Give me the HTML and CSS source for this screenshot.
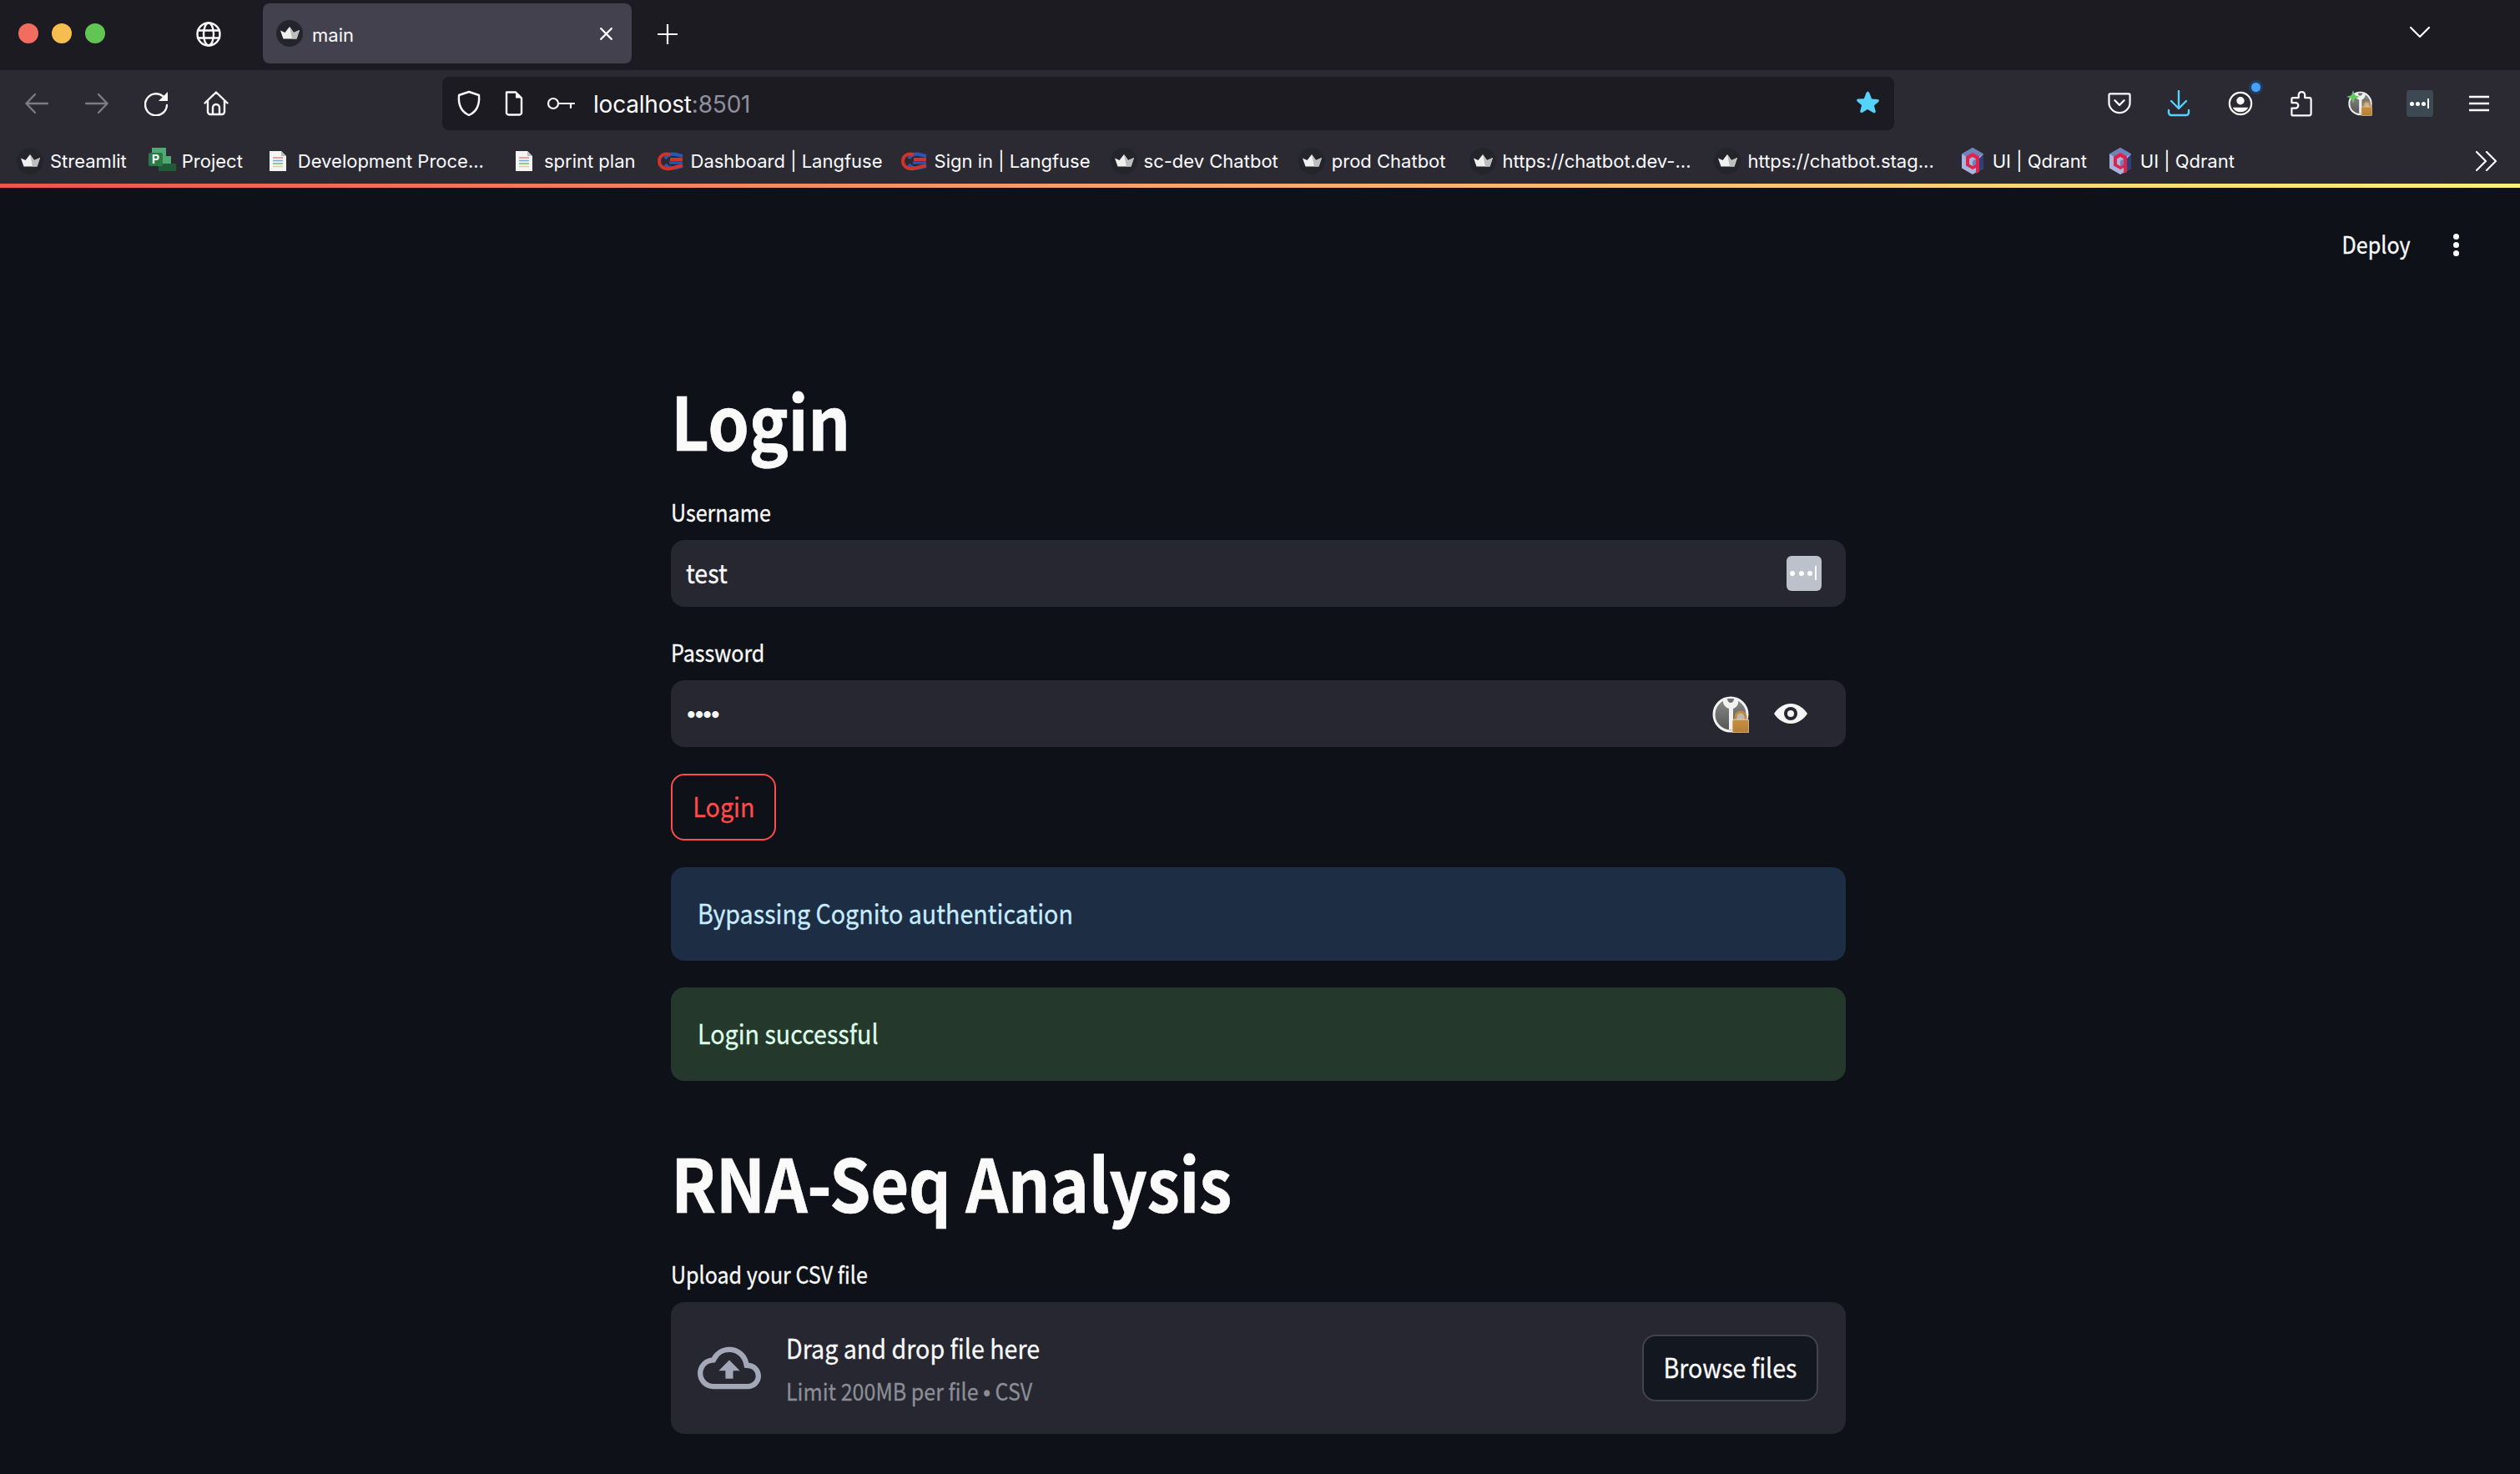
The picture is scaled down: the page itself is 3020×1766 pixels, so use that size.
FILE: index.html
```html
<!DOCTYPE html>
<html lang="en">
<head>
<meta charset="utf-8">
<title>main</title>
<link rel="stylesheet" href="styles.css">
</head>
<body>
<svg class="defs" width="0" height="0" aria-hidden="true">
  <defs>
    <symbol id="st" viewBox="0 0 32 32">
      <circle cx="16" cy="16" r="16" fill="#24252c"/>
      <path d="M5 12.500l5.500 2.500L16 8l5 7 7-3-3.500 10.500h-16z" fill="#f0f0f0"/>
      <path d="M16 8l5 7 7-3-3.500 10.500H19z" fill="#bdbdbd"/>
    </symbol>
    <symbol id="doc" viewBox="0 0 20 24">
      <path d="M0 0h14l6 6v18H0z" fill="#f4f4f4"/>
      <path d="M14 0l6 6h-6z" fill="#bcbcbc"/>
      <path d="M4 8h12" stroke="#e58a78" stroke-width="1.500"/>
      <path d="M4 11.500h12" stroke="#7aa7e0" stroke-width="1.500"/>
      <path d="M4 15h12" stroke="#72b77c" stroke-width="1.500"/>
      <path d="M4 18.500h12" stroke="#efcf5f" stroke-width="1.500"/>
    </symbol>
    <symbol id="lf" viewBox="0 0 32 32">
      <path d="M9 13c3-5 8-6 13-5l8 2M9 20c3 4 8 5 13 4l8-2" fill="none" stroke="#2c57b4" stroke-width="4"/>
      <path d="M15 8C6 6 2 11 2 16s4 10 13 9l15-4M15 14h15" fill="none" stroke="#d0322c" stroke-width="4"/>
      <path d="M14 18h16" fill="none" stroke="#2c57b4" stroke-width="3"/>
    </symbol>
    <symbol id="qd" viewBox="0 0 28 32">
      <path d="M14 0l13 7.500v17L14 32 1 24.500v-17z" fill="#a7b5de"/>
      <path d="M14 0l13 7.500L14 15 1 7.500z" fill="#6f82b9"/>
      <path d="M27 7.500v17L20 28.500V15z" fill="#2d3e78"/>
      <path d="M14 6l8 4.500V29l-4 2V24l-4 2-8-4.500v-11z" fill="#dc244c"/>
      <path d="M14 11l4 2.300v6.500L14 22l-4-2.200v-6.500z" fill="#a7b5de"/>
      <path d="M14 16l4-2.700v6.500L14 22z" fill="#6f82b9"/>
    </symbol>
    <symbol id="kp" viewBox="0 0 44 44">
      <linearGradient id="kpg" x1="0" y1="0" x2="0" y2="1"><stop offset="0" stop-color="#8a8a8a"/><stop offset="1" stop-color="#555"/></linearGradient>
      <linearGradient id="lockg" x1="0" y1="0" x2="0" y2="1"><stop offset="0" stop-color="#c68f42"/><stop offset="1" stop-color="#b57f33"/></linearGradient>
      <circle cx="22" cy="22" r="20" fill="url(#kpg)" stroke="#f2f2f2" stroke-width="3"/>
      <path d="M13 4h18c1 5-1 9-6 11v25h-5V15c-5-2-8-6-7-11z" fill="#f2f2f2"/>
      <path d="M18 3h8c0 3-2 5-4 5s-4-2-4-5z" fill="#6f6f6f"/>
      <path d="M28 32v-7a6 6 0 0 1 12 0v7" fill="#bdb6aa" stroke="#c18a3f" stroke-width="3"/>
      <rect x="24" y="28" width="20" height="16" rx="2" fill="url(#lockg)" stroke="#f0e8da" stroke-width=".8"/>
    </symbol>
  </defs>
</svg>

<header class="browser">
  <div class="tabstrip">
    <div class="lights"><i class="light red"></i><i class="light yellow"></i><i class="light green"></i></div>
    <svg class="ico globe" viewBox="0 0 30 30"><circle cx="15" cy="15" r="13.500"/><ellipse cx="15" cy="15" rx="6" ry="13.500"/><path d="M2 10.500h26M2 19.500h26"/></svg>
    <div class="tab">
      <svg class="fav"><use href="#st"/></svg>
      <span class="tab-title">main</span>
      <svg class="ico tab-x" viewBox="0 0 16 16"><path d="M2 2l12 12M14 2L2 14"/></svg>
    </div>
    <svg class="ico newtab" viewBox="0 0 24 24"><path d="M12 0v24M0 12h24"/></svg>
    <svg class="ico tabs-down" viewBox="0 0 24 14"><path d="M1 1l11 11L23 1"/></svg>
  </div>

  <div class="toolbar">
    <div class="nav">
      <svg class="ico dim" viewBox="0 0 28 24"><path d="M27 12H2M12 1L1.500 12 12 23"/></svg>
      <svg class="ico dim" viewBox="0 0 28 24"><path d="M1 12h25M16 1l10.500 11L16 23"/></svg>
      <svg class="ico reload" viewBox="0 0 30 30"><path d="M27 17a13 13 0 1 1-5-11"/><path class="solid" d="M28 1v11H17z"/></svg>
      <svg class="ico home" viewBox="0 0 30 30"><path d="M1.500 14.500L15 1.500l13.500 13M5 11.500V25a3 3 0 0 0 3 3h14a3 3 0 0 0 3-3V11.500M11 28v-8a4 4 0 0 1 8 0v8"/></svg>
    </div>
    <div class="urlbar">
      <svg class="ico shield" viewBox="0 0 30 32"><path d="M15 2l12 4c1 12-3 20-12 24C6 26 2 18 3 6z"/></svg>
      <svg class="ico page" viewBox="0 0 24 30"><path d="M3 1.500h11l7 7V26a2.500 2.500 0 0 1-2.500 2.500h-13A2.500 2.500 0 0 1 3 26z"/><path class="solid" d="M14 1.500l7 7h-7z"/></svg>
      <svg class="ico key" viewBox="0 0 34 18"><circle cx="8" cy="9" r="6"/><path d="M14 9h19M29 9v5"/></svg>
      <span class="url">localhost<span class="port">:8501</span></span>
      <svg class="star" viewBox="0 0 32 32"><path d="M16 1.500c1.300 0 2 .9 2.600 2.400l2.500 6.600 7 .4c1.600.1 2.400 1.900 1.200 3l-5.400 4.500 1.800 6.800c.4 1.600-1.300 2.800-2.700 1.900L16 23l-6 3.800c-1.400.9-3.100-.3-2.700-1.900l1.800-6.800-5.400-4.500c-1.200-1.100-.4-2.900 1.200-3l7-.4 2.500-6.600c.6-1.500 1.300-2.400 2.600-2.400z"/></svg>
    </div>
    <div class="actions">
      <svg class="ico pocket" viewBox="0 0 30 28"><path d="M3 1.500h24a1.500 1.500 0 0 1 1.500 1.500v10c0 7-6 13-13.500 13S1.500 20 1.500 13V3A1.500 1.500 0 0 1 3 1.500zM9 10l6 6 6-6"/></svg>
      <svg class="ico dl" viewBox="0 0 28 32"><path d="M14 1v21M5 13l9 9 9-9M2 24v3a3 3 0 0 0 3 3h18a3 3 0 0 0 3-3v-3"/></svg>
      <span class="account">
        <svg class="ico" viewBox="0 0 32 32"><circle cx="16" cy="16" r="14"/><circle class="solid" cx="16" cy="12.500" r="5"/><path class="solid" d="M6 21h20c-2 4-6 6-10 6s-8-2-10-6z"/></svg>
        <i class="badge"></i>
      </span>
      <svg class="ico puzzle" viewBox="0 0 28 34"><path d="M3 32.500a1.500 1.500 0 0 1-1.500-1.500v-8h5a3.500 3.500 0 0 0 0-7h-5V11a1.500 1.500 0 0 1 1.500-1.500h7.500V6a4 4 0 0 1 8 0v3.500H24a2.500 2.500 0 0 1 2.500 2.500v18a2.500 2.500 0 0 1-2.500 2.500z"/></svg>
      <span class="kp-ext">
        <svg class="kp-ico"><use href="#kp"/></svg>
        <svg class="spark" viewBox="0 0 20 20"><path d="M10 0l2.500 7.500L20 10l-7.500 2.500L10 20l-2.500-7.500L0 10l7.500-2.500z"/></svg>
      </span>
      <span class="dots-ext"><i></i><i></i><i></i><b></b></span>
      <svg class="ico menu" viewBox="0 0 24 20"><path d="M0 2h24M0 10h24M0 18h24"/></svg>
    </div>
  </div>

  <nav class="bookmarks">
    <a class="bm b1"><svg class="bm-ico"><use href="#st"/></svg>Streamlit</a>
    <a class="bm b2"><svg class="bm-ico project" viewBox="0 0 32 32"><path d="M4 0h17v10h6v12H4z" fill="#4eaa72"/><rect x="12" y="19" width="21" height="9" rx="1" fill="#205a36"/><rect y="6" width="17" height="16" rx="2" fill="#2a7a47"/><text class="p-mark" x="8.500" y="19">P</text></svg>Project</a>
    <a class="bm b3"><svg class="bm-ico doc"><use href="#doc"/></svg>Development Proce...</a>
    <a class="bm b4"><svg class="bm-ico doc"><use href="#doc"/></svg>sprint plan</a>
    <a class="bm b5"><svg class="bm-ico"><use href="#lf"/></svg>Dashboard | Langfuse</a>
    <a class="bm b6"><svg class="bm-ico"><use href="#lf"/></svg>Sign in | Langfuse</a>
    <a class="bm b7"><svg class="bm-ico"><use href="#st"/></svg>sc-dev Chatbot</a>
    <a class="bm b8"><svg class="bm-ico"><use href="#st"/></svg>prod Chatbot</a>
    <a class="bm b9"><svg class="bm-ico"><use href="#st"/></svg>https://chatbot.dev-...</a>
    <a class="bm b10"><svg class="bm-ico"><use href="#st"/></svg>https://chatbot.stag...</a>
    <a class="bm b11"><svg class="bm-ico"><use href="#qd"/></svg>UI | Qdrant</a>
    <a class="bm b12"><svg class="bm-ico"><use href="#qd"/></svg>UI | Qdrant</a>
    <svg class="ico more-bm" viewBox="0 0 26 24"><path d="M1 1l11 11L1 23M13 1l11 11-11 11"/></svg>
  </nav>
</header>
<div class="rainbow"></div>

<div class="app">
  <div class="app-header">
    <span class="deploy">Deploy</span>
    <span class="kebab"><i></i><i></i><i></i></span>
  </div>
  <main class="content">
    <h1 class="title t-login">Login</h1>
    <label class="label l-user">Username</label>
    <div class="input">
      <span class="value">test</span>
      <span class="pw-btn"><i></i><i></i><i></i><b></b></span>
    </div>
    <label class="label l-pass">Password</label>
    <div class="input">
      <span class="dots">••••</span>
      <svg class="kp-field"><use href="#kp"/></svg>
      <svg class="eye" viewBox="0 0 40 26"><path d="M20 1C11 1 4 7 0 13c4 6 11 12 20 12s16-6 20-12C36 7 29 1 20 1z" fill="#f5f5f5"/><circle cx="20" cy="13" r="8" fill="#262730"/><circle cx="20" cy="13" r="4" fill="#f5f5f5"/></svg>
    </div>
    <button class="login-btn"><span class="nw-c">Login</span></button>
    <div class="alert info"><span class="nw">Bypassing Cognito authentication</span></div>
    <div class="alert success"><span class="nw">Login successful</span></div>
    <h1 class="title t-rna">RNA-Seq Analysis</h1>
    <label class="label l-up">Upload your CSV file</label>
    <div class="dropzone">
      <svg class="cloud" viewBox="0 0 24 24"><path d="M19.350 10.040A7.490 7.490 0 0 0 12 4C9.110 4 6.600 5.640 5.350 8.040A5.994 5.994 0 0 0 0 14c0 3.310 2.690 6 6 6h13c2.760 0 5-2.240 5-5 0-2.640-2.050-4.780-4.650-4.960zM19 18H6c-2.210 0-4-1.790-4-4 0-2.050 1.530-3.760 3.560-3.970l1.070-.11.500-.95A5.469 5.469 0 0 1 12 6c2.620 0 4.880 1.860 5.390 4.430l.3 1.500 1.530.11A2.980 2.980 0 0 1 22 15c0 1.650-1.350 3-3 3zM8 13h2.550v3h2.900v-3H16l-4-4z"/></svg>
      <div class="dz-text">
        <div class="dz-main">Drag and drop file here</div>
        <div class="dz-sub">Limit 200MB per file <span class="bullet">•</span> CSV</div>
      </div>
      <button class="browse"><span class="nw-c">Browse files</span></button>
    </div>
  </main>
</div>
</body>
</html>
```

FILE: styles.css
```css
* { box-sizing: border-box; }
html, body { margin: 0; height: 100%; }
body {
  background: #0e1117;
  color: #fafafa;
  font-family: "Noto Sans CJK SC", "Noto Sans", sans-serif;
  overflow: hidden;
}
.defs { display: block; height: 0; }
i, b { display: block; }

.browser { font-family: Inter, Roboto, sans-serif; color: #fbfbfe; }
.ico { display: block; fill: none; stroke: #fbfbfe; stroke-width: 2.4; stroke-linecap: round; stroke-linejoin: round; flex: none; }
.ico .solid { fill: #fbfbfe; stroke: none; }

.tabstrip { height: 84px; background: #1c1b22; display: flex; align-items: center; position: relative; }
.lights { display: flex; gap: 16px; margin-left: 22px; margin-top: -4px; }
.light { width: 24px; height: 24px; border-radius: 50%; }
.red { background: #f26d5f; }
.yellow { background: #f5be4f; }
.green { background: #61c554; }
.globe { width: 30px; height: 30px; margin-left: 109px; margin-top: -2px; }
.tab { width: 442px; height: 72px; margin-left: 50px; margin-top: -4px; border-radius: 8px; background: #42414d; display: flex; align-items: center; padding: 0 22px 0 16px; }
.fav { width: 32px; height: 32px; flex: none; }
.tab-title { margin-left: 11px; margin-top: 3px; font-size: 22px; flex: 1; }
.tab-x { width: 17px; height: 17px; stroke-width: 2; }
.newtab { width: 24px; height: 24px; margin-left: 31px; margin-top: -2px; stroke-width: 2.2; }
.tabs-down { width: 24px; height: 14px; margin-left: auto; margin-right: 108px; margin-top: -6px; stroke-width: 2.2; }

.toolbar { height: 84px; background: #2b2a33; display: flex; align-items: flex-start; padding-top: 8px; }
.nav { width: 530px; height: 64px; display: flex; align-items: center; padding-left: 30px; }
.nav svg { width: 28px; height: 24px; }
.nav .dim { stroke: #7c7b82; }
.nav svg:nth-child(2) { margin-left: 44px; }
.nav .reload { width: 30px; height: 30px; margin-left: 43px; }
.nav .home { width: 30px; height: 30px; margin-left: 41px; }
.urlbar { width: 1740px; height: 64px; background: #1c1b22; border-radius: 8px; display: flex; align-items: center; padding: 0 16px 0 17px; }
.shield { width: 30px; height: 32px; }
.page { width: 24px; height: 30px; margin-left: 27px; }
.key { width: 34px; height: 18px; margin-left: 27px; stroke-width: 2.2; }
.url { margin-left: 22px; margin-top: 1px; font-size: 28px; color: #fbfbfe; flex: 1; letter-spacing: -.2px; }
.port { color: #8f8f9d; }
.star { width: 32px; height: 32px; fill: #54d4fd; }

.actions { flex: 1; height: 64px; display: flex; align-items: center; position: relative; padding-left: 256px; }
.actions > * { flex: none; }
.pocket { width: 28px; height: 26px; }
.dl { width: 28px; height: 32px; margin-left: 43px; stroke: #54d4fd; }
.account { position: relative; width: 30px; height: 30px; margin-left: 45px; display: block; }
.account svg { width: 30px; height: 30px; }
.badge { position: absolute; right: -9px; top: -10px; width: 11px; height: 11px; border-radius: 50%; background: #45a1ff; box-shadow: 0 0 0 3px #203f5f; }
.puzzle { width: 26px; height: 32px; margin-left: 45px; }
.kp-ext { position: relative; width: 29px; height: 30px; margin-left: 43px; display: block; }
.kp-ico { width: 29px; height: 30px; display: block; }
.spark { position: absolute; left: -2px; top: -2px; width: 16px; height: 18px; fill: #65c95a; }
.dots-ext { width: 32px; height: 32px; margin-left: 41px; background: #3c4852; border-radius: 3px; display: flex; align-items: center; padding-left: 4px; gap: 2px; }
.dots-ext i { width: 5px; height: 5px; border-radius: 50%; background: #fff; }
.dots-ext b { width: 1.5px; height: 12px; background: #fff; }
.menu { width: 24px; height: 20px; margin-left: 43px; }

.bookmarks { height: 52px; background: #2b2a33; position: relative; display: flex; align-items: center; font-size: 22px; padding-bottom: 2px; }
.bm { display: flex; align-items: center; white-space: nowrap; flex: none; }
.bm-ico { width: 32px; height: 32px; margin-right: 8px; flex: none; }
.bm-ico.doc { width: 20px; height: 24px; margin-right: 14px; }
.project { overflow: visible; }
.p-mark { font: 700 14px Inter, sans-serif; fill: #fff; text-anchor: middle; }
.b1 { margin-left: 20px; }
.b2 { margin-left: 26px; }
.b3 { margin-left: 32px; }
.b4 { margin-left: 38px; }
.b5 { margin-left: 26px; }
.b6 { margin-left: 22px; }
.b7 { margin-left: 24px; }
.b8 { margin-left: 24px; }
.b9 { margin-left: 28px; }
.b10 { margin-left: 28px; }
.b11 { margin-left: 30px; }
.b12 { margin-left: 24px; }
.more-bm { width: 26px; height: 24px; margin-left: auto; margin-right: 27px; stroke-width: 2.2; }

.rainbow { height: 5px; background: linear-gradient(90deg, #ef5350 0%, #f5a26f 45%, #fff176 100%); }

/* Source Sans proportions from the CJK family's Latin glyphs */
.nw, .nw-c, .value, .label, .dz-main, .dz-sub, .deploy, .title { display: inline-block; white-space: nowrap; transform: translateY(-2px) scaleX(.895); transform-origin: left center; -webkit-text-stroke: .3px currentColor; }
.nw-c { transform-origin: center; }
.deploy { transform-origin: right center; }
.label, .deploy, .dz-main, .dz-sub { transform: translateY(-1px) scaleX(.895); }
.dz-main, .dz-sub { transform: scaleX(.895); }
.title { transform: translateY(-2px) scaleX(.903); -webkit-text-stroke: .6px currentColor; }

.app-header { display: flex; justify-content: flex-end; align-items: center; height: 136px; padding-right: 72px; }
.deploy { font-size: 28px; margin-right: 51px; line-height: 40px; }
.kebab { display: flex; flex-direction: column; gap: 3px; width: 8px; }
.kebab i { width: 7px; height: 7px; border-radius: 50%; background: #fafafa; }

.content { width: 1408px; margin-left: 804px; }
.title { display: block; margin: 0; font-size: 88px; font-weight: 700; line-height: 1.2; color: #fafafa; letter-spacing: -.5px; }
.t-login { margin-top: 90px; }
.t-rna { margin-top: 69px; }
.label { display: block; font-size: 28px; line-height: 40px; color: #fafafa; margin-bottom: 13px; }
.l-user { margin-top: 37px; }
.l-pass { margin-top: 35px; }
.l-up { margin-top: 38px; }
.input { height: 80px; background: #262730; border-radius: 16px; display: flex; align-items: center; padding: 0 46px 0 18px; }
.value { font-size: 32px; flex: 1; }
.dots { font-size: 26px; letter-spacing: -5px; font-family: Inter, sans-serif; flex: 1; margin-left: -1px; }
.pw-btn { width: 42px; height: 42px; background: #bdc1cb; border-radius: 6px; margin-right: -17px; display: flex; align-items: center; padding-left: 4px; gap: 4.5px; }
.pw-btn i { width: 6px; height: 6px; border-radius: 50%; background: #fff; }
.pw-btn b { width: 2px; height: 17px; background: #fff; margin-left: -2px; }
.kp-field { width: 44px; height: 44px; margin-right: 30px; margin-top: 2px; }
.eye { width: 40px; height: 26px; }
.login-btn { display: block; width: 126px; height: 80px; margin-top: 32px; border: 2px solid #ff4b4b; border-radius: 16px; background: #0e1117; color: #ff4b4b; font: 400 32px "Noto Sans CJK SC", sans-serif; padding: 0; }
.alert { height: 112px; margin-top: 32px; border-radius: 16px; padding-left: 32px; font-size: 32px; display: flex; align-items: center; }
.info { background: #1d2d44; color: #c7ebff; }
.success { background: #24392c; color: #dffde9; }
.dropzone { height: 158px; background: #262730; border-radius: 16px; display: flex; align-items: center; padding: 0 32px; }
.cloud { width: 76px; height: 76px; fill: #a3a8b8; flex: none; }
.dz-text { margin-left: 30px; margin-top: 2px; flex: 1; }
.dz-main { display: block; font-size: 32px; line-height: 44px; }
.dz-sub { display: block; font-size: 28px; line-height: 40px; margin-top: 10px; color: #8b8e96; }
.bullet { font-family: "Liberation Sans", sans-serif; }
.browse { width: 211px; height: 80px; border: 2px solid #41444c; border-radius: 16px; background: #131720; color: #fafafa; font: 400 32px "Noto Sans CJK SC", sans-serif; padding: 0; margin-right: 1px; }
```
